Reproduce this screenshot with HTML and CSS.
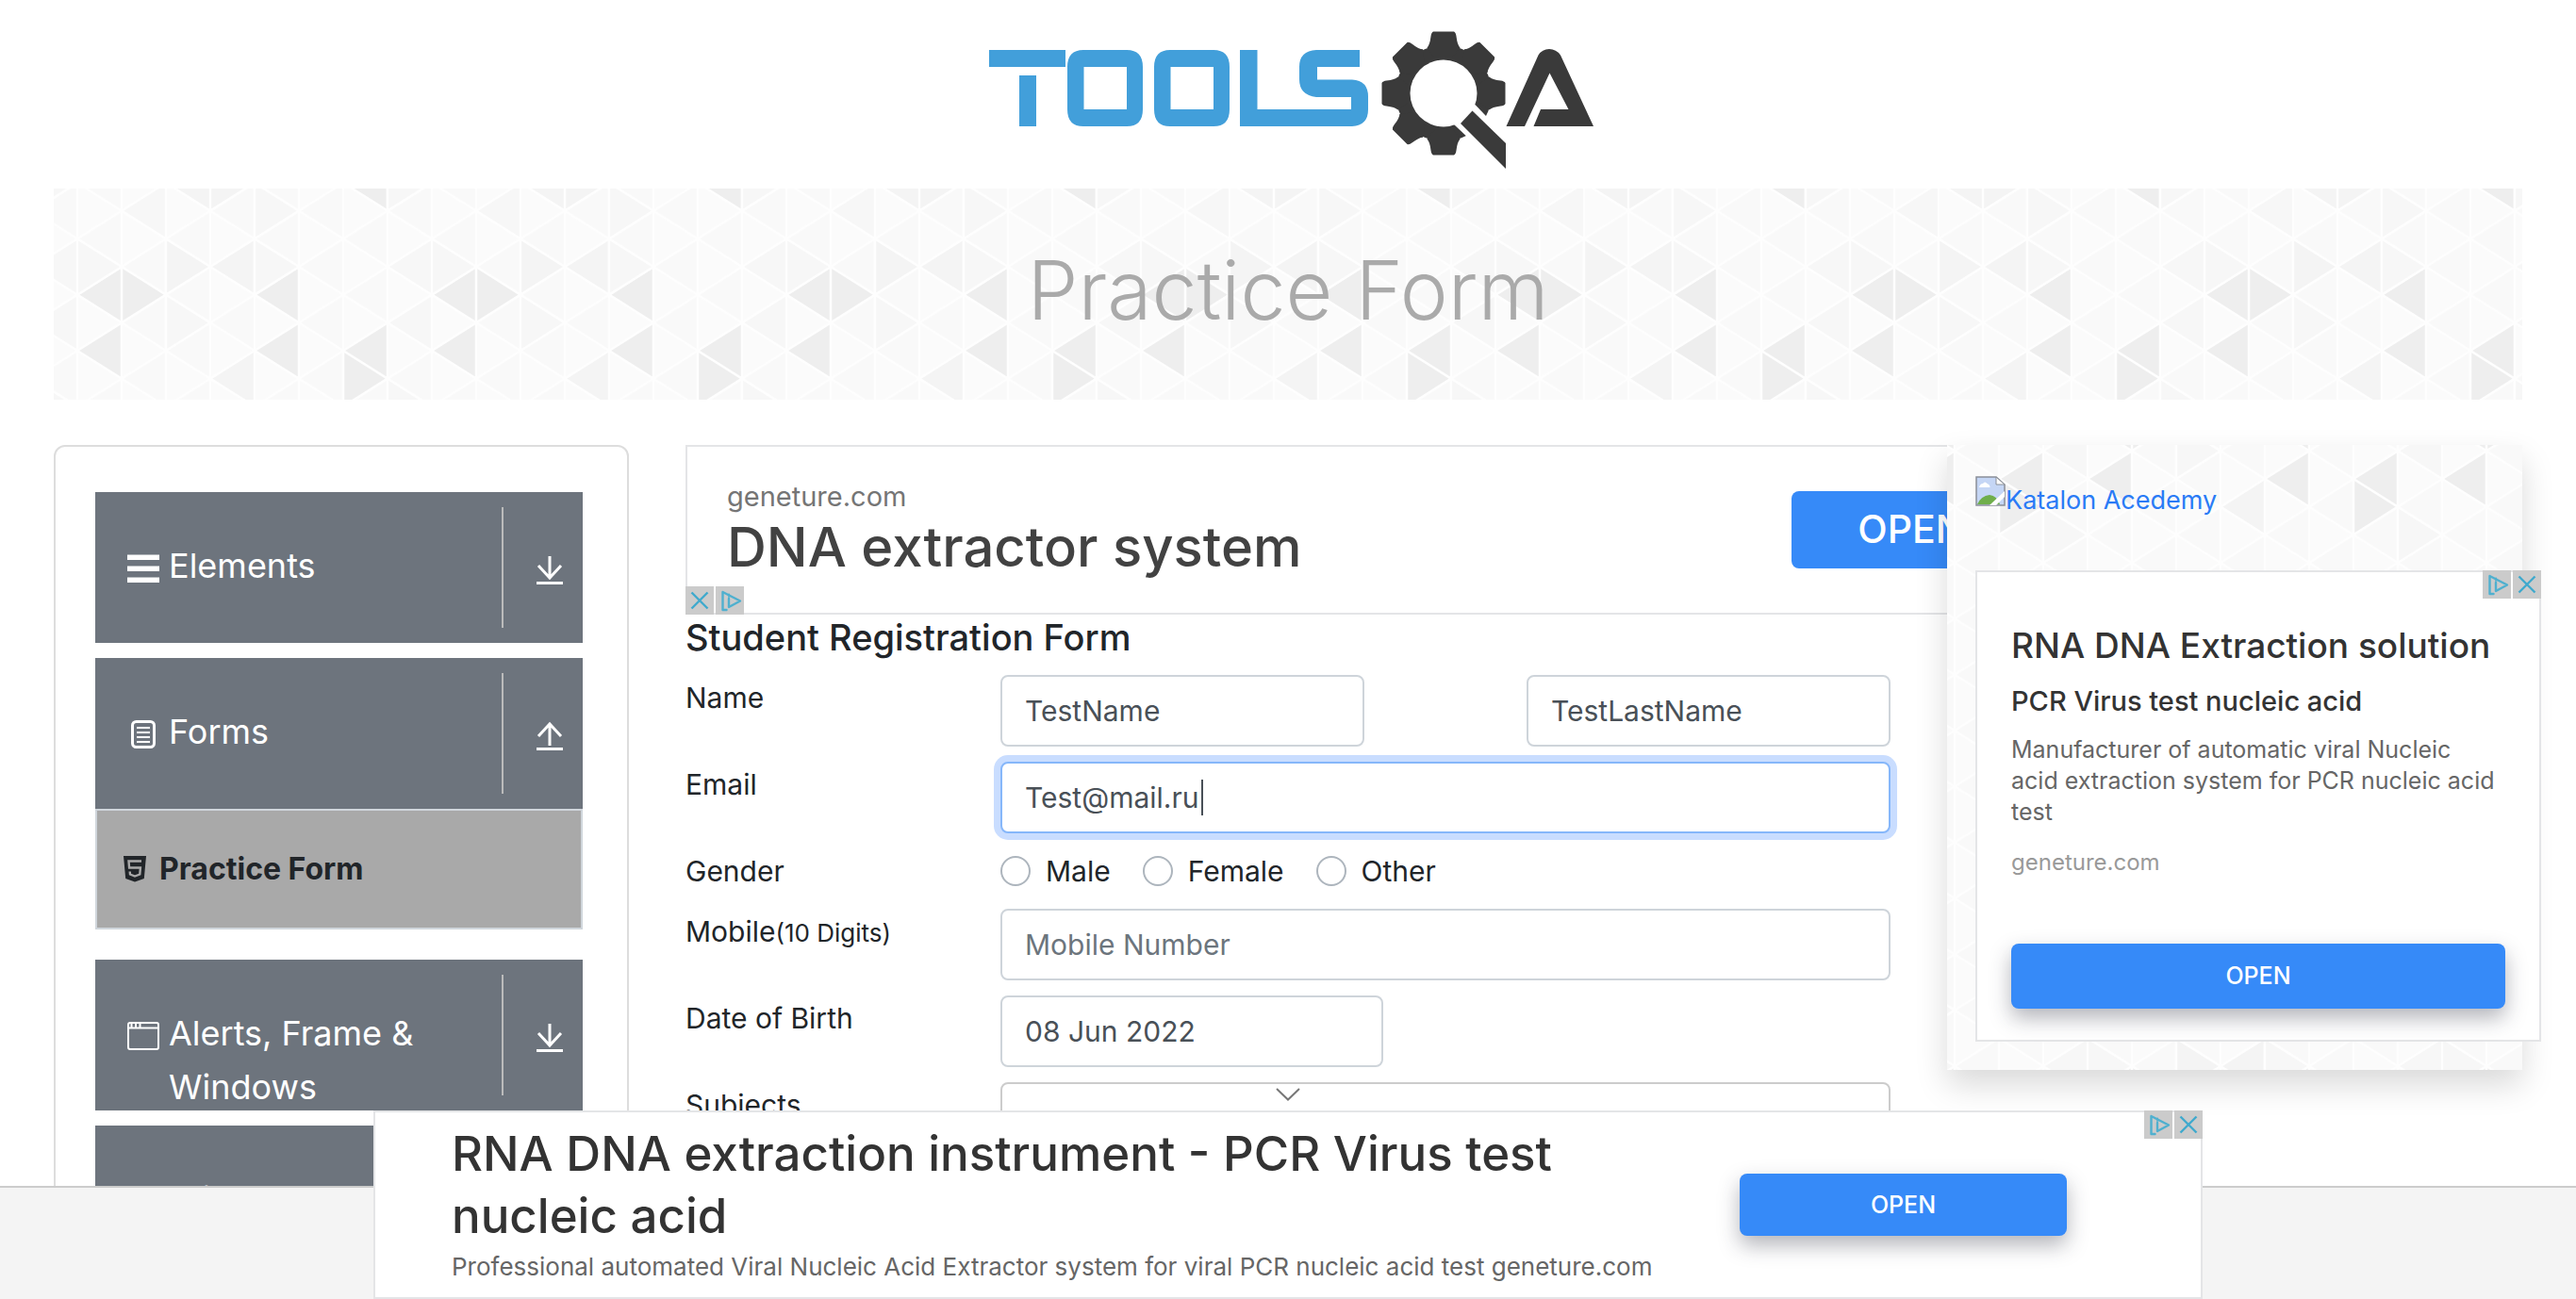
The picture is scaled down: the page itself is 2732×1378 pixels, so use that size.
FILE: index.html
```html
<!DOCTYPE html>
<html lang="en">
<head>
<meta charset="utf-8">
<meta name="viewport" content="width=device-width, initial-scale=1">
<title>ToolsQA – Practice Form</title>
<link rel="stylesheet" href="styles.css">
</head>
<body>
<svg class="sprite" aria-hidden="true">
  <symbol id="arrow-down" viewBox="0 0 28 40"><path d="M14 8v23M2 18l12 13 12-13M0 36.500h28" fill="none" stroke="#fff" stroke-width="3"/></symbol>
  <symbol id="arrow-up" viewBox="0 0 28 40"><path d="M14 33V10M2 23L14 10l12 13M0 36.500h28" fill="none" stroke="#fff" stroke-width="3"/></symbol>
  <symbol id="adchoices" viewBox="0 0 30 30"><path d="M7.500 25V6L26 15.500 14 22v-9M14 8.800v1.700M7.500 25h4" fill="none" stroke="#4fb0cf" stroke-width="2.400" stroke-linejoin="round" stroke-linecap="round"/></symbol>
  <symbol id="close" viewBox="0 0 30 30"><path d="M6.500 6.500l17 17M23.500 6.500l-17 17" stroke="#3fa9cd" stroke-width="2.400"/></symbol>
</svg>

<header class="header">
  <a class="logo" href="#" aria-label="ToolsQA">
    <svg viewBox="0 0 732 200" width="732" height="200">
      <g fill="#429fda">
        <path d="M49 53h81v18H49zM81 80h18v54H81z"/>
        <path fill-rule="evenodd" d="M149 53h46q17 0 17 18v45q0 18-17 18h-46q-17 0-17-18V71q0-18 17-18zM149.500 71v45h45.500V71z"/>
        <path fill-rule="evenodd" d="M241 53h46q17 0 17 18v45q0 18-17 18h-46q-17 0-17-18V71q0-18 17-18zM241.500 71v45h45.500V71z"/>
        <path d="M315 53h18.500v63H433v-13h-37q-18-2-18-19V71q0-17 18-18h46v18h-45v13.500h37q17 1 17 18V116q0 17-17 18H315z"/>
      </g>
      <g fill="#3a3a3a">
        <circle cx="531" cy="99" r="51"/>
        <path d="M520 33.500h22q2 1 2.500 5 1 9 4 12l-8 10h-20l-7-10q3-3 4-12 .500-4 2.500-5z"/>
        <path d="M520 33.500h22q2 1 2.500 5 1 9 4 12l-8 10h-20l-7-10q3-3 4-12 .500-4 2.500-5z" transform="rotate(45 531 99)"/>
        <path d="M520 33.500h22q2 1 2.500 5 1 9 4 12l-8 10h-20l-7-10q3-3 4-12 .500-4 2.500-5z" transform="rotate(90 531 99)"/>
        <path d="M520 33.500h22q2 1 2.500 5 1 9 4 12l-8 10h-20l-7-10q3-3 4-12 .500-4 2.500-5z" transform="rotate(180 531 99)"/>
        <path d="M520 33.500h22q2 1 2.500 5 1 9 4 12l-8 10h-20l-7-10q3-3 4-12 .500-4 2.500-5z" transform="rotate(225 531 99)"/>
        <path d="M520 33.500h22q2 1 2.500 5 1 9 4 12l-8 10h-20l-7-10q3-3 4-12 .500-4 2.500-5z" transform="rotate(270 531 99)"/>
        <path d="M520 33.500h22q2 1 2.500 5 1 9 4 12l-8 10h-20l-7-10q3-3 4-12 .500-4 2.500-5z" transform="rotate(315 531 99)"/>
      </g>
      <circle cx="531" cy="99" r="35.500" fill="#fff"/>
      <path d="M564.500 111L614 163v37L542 132z" fill="#fff"/>
      <g fill="#3a3a3a">
        <path d="M561.500 117.500L597 152v27L549 131z"/>
        <path d="M597.500 134l34-75.500q4-6.500 11.500-6.500t12 6.500L690 134h-63.500l7.500-18h29.500L643.500 77.500 617 134z"/>
      </g>
    </svg>
  </a>
</header>

<div class="banner pattern"><h1>Practice Form</h1></div>

<div class="columns">
  <nav class="sidebar" aria-label="Sections">
    <button class="group" type="button">
      <svg class="group-icon" viewBox="0 0 34 57"><path d="M0 16.500h34v5.500H0zM0 28.500h34V34H0zM0 40.500h34V46H0z" fill="#fff"/></svg>
      <span class="group-label">Elements</span>
      <span class="group-arrow"><svg viewBox="0 0 28 40"><use href="#arrow-down"/></svg></span>
    </button>
    <button class="group open" type="button">
      <svg class="group-icon" viewBox="0 0 34 57"><rect x="5.500" y="17.500" width="23" height="27" rx="4" fill="none" stroke="#fff" stroke-width="3"/><path d="M10 24h14M10 29h14M10 34h14M10 39h14" stroke="#fff" stroke-width="2"/></svg>
      <span class="group-label">Forms</span>
      <span class="group-arrow"><svg viewBox="0 0 28 40"><use href="#arrow-up"/></svg></span>
    </button>
    <a class="item" href="#">
      <svg class="item-icon" viewBox="0 0 24 28"><path d="M0 0h24l-2.200 24L12 27.500 2.200 24z" fill="#212529"/><path d="M19 5.500H5.500l.6 7h11.800l-.6 7L12 21.500l-5-2-.3-3" fill="none" stroke="#a9a9a9" stroke-width="2.400"/></svg>
      <span>Practice Form</span>
    </a>
    <button class="group" type="button">
      <svg class="group-icon" viewBox="0 0 34 57"><rect x="1" y="17" width="32" height="28" rx="2" fill="none" stroke="#fff" stroke-width="2"/><path d="M1 22.500h32M4.500 18v4M9 18v4M13.500 18v4" stroke="#fff" stroke-width="2"/></svg>
      <span class="group-label">Alerts, Frame &amp; Windows</span>
      <span class="group-arrow"><svg viewBox="0 0 28 40"><use href="#arrow-down"/></svg></span>
    </button>
    <button class="group" type="button">
      <svg class="group-icon" viewBox="0 0 34 57"><path d="M2 18h12v12H2zM20 18h12v12H20zM2 36h12v12H2zM20 36h12v12H20z" fill="#fff"/></svg>
      <span class="group-label">Widgets</span>
      <span class="group-arrow"><svg viewBox="0 0 28 40"><use href="#arrow-down"/></svg></span>
    </button>
  </nav>

  <main class="main">
    <section class="ad ad-top" aria-label="Advertisement">
      <div>
        <p class="ad-site">geneture.com</p>
        <p class="ad-headline">DNA extractor system</p>
      </div>
      <button class="ad-open" type="button">OPEN</button>
      <div class="ad-marks left">
        <button type="button" aria-label="Close ad"><svg viewBox="0 0 30 30"><use href="#close"/></svg></button>
        <button type="button" aria-label="Ad choices"><svg viewBox="0 0 30 30"><use href="#adchoices"/></svg></button>
      </div>
    </section>

    <form class="form">
      <h2>Student Registration Form</h2>
      <div class="row">
        <label for="first">Name</label>
        <div class="names">
          <input class="field" id="first" type="text" value="TestName">
          <input class="field" type="text" value="TestLastName" aria-label="Last name">
        </div>
      </div>
      <div class="row">
        <label for="email">Email</label>
        <div class="email">
          <input class="field focused" id="email" type="text" value="Test@mail.ru">
          <span class="caret"></span>
        </div>
      </div>
      <div class="row">
        <span>Gender</span>
        <div class="radios">
          <label><input type="radio" name="gender">Male</label>
          <label><input type="radio" name="gender">Female</label>
          <label><input type="radio" name="gender">Other</label>
        </div>
      </div>
      <div class="row">
        <label for="mobile">Mobile<small>(10 Digits)</small></label>
        <input class="field" id="mobile" type="text" placeholder="Mobile Number">
      </div>
      <div class="row">
        <label for="birth">Date of Birth</label>
        <input class="field date" id="birth" type="text" value="08 Jun 2022">
      </div>
      <div class="row">
        <label for="subjects">Subjects</label>
        <input class="field subjects" id="subjects" type="text">
      </div>
    </form>
  </main>

  <aside class="side pattern">
    <a class="katalon" href="#">
      <svg viewBox="0 0 32 32"><path d="M1 1h21l9 8v22H1z" fill="#c5d6f5" stroke="#8a8f98" stroke-width="1.500"/><path d="M4 12q1-4 4-4 2-3 4.500 0 3 1 3 4z" fill="#fff"/><path d="M2 30q4-9 13-10 8 1 11 10z" fill="#6fae4b"/><path d="M31 16v6l-9 9h-7z" fill="#fff"/><path d="M22 1v8h9z" fill="#fff" stroke="#8a8f98"/></svg>
      <span>Katalon Acedemy</span>
    </a>
    <section class="ad ad-side" aria-label="Advertisement">
      <h3>RNA DNA Extraction solution</h3>
      <h4>PCR Virus test nucleic acid</h4>
      <p class="ad-text">Manufacturer of automatic viral Nucleic acid extraction system for PCR nucleic acid test</p>
      <p class="ad-url">geneture.com</p>
      <button class="ad-open raised" type="button">OPEN</button>
      <div class="ad-marks">
        <button type="button" aria-label="Ad choices"><svg viewBox="0 0 30 30"><use href="#adchoices"/></svg></button>
        <button type="button" aria-label="Close ad"><svg viewBox="0 0 30 30"><use href="#close"/></svg></button>
      </div>
    </section>
  </aside>
</div>

<footer class="footer"></footer>

<section class="ad ad-bottom" aria-label="Advertisement">
  <button class="collapse" type="button" aria-label="Hide ad"><svg viewBox="0 0 26 14"><path d="M1 1l12 11.500L25 1" fill="none" stroke="#777" stroke-width="2"/></svg></button>
  <div class="ad-copy">
    <p class="ad-title">RNA DNA extraction instrument - PCR Virus test nucleic acid</p>
    <p class="ad-sub">Professional automated Viral Nucleic Acid Extractor system for viral PCR nucleic acid test geneture.com</p>
  </div>
  <button class="ad-open raised" type="button">OPEN</button>
  <div class="ad-marks">
    <button type="button" aria-label="Ad choices"><svg viewBox="0 0 30 30"><use href="#adchoices"/></svg></button>
    <button type="button" aria-label="Close ad"><svg viewBox="0 0 30 30"><use href="#close"/></svg></button>
  </div>
</section>
</body>
</html>
```
FILE: styles.css
```css
*, *::before, *::after { box-sizing: border-box; }

body {
  margin: 0;
  height: 100vh;
  overflow: hidden;
  background: #fff;
  color: #212529;
  font: 400 30px/48px Inter, "Liberation Sans", sans-serif;
}

h1, h2, h3, h4, p { margin: 0; }
button { border: 0; padding: 0; font: inherit; color: inherit; cursor: pointer; }
a { color: inherit; text-decoration: none; }
svg { display: block; flex: none; }
.sprite { position: absolute; width: 0; height: 0; }

/* Header and banner */
.header { display: flex; justify-content: center; height: 200px; }

.pattern {
  background-color: #fafafa;
  background-image: url("data:image/svg+xml,%3Csvg xmlns='http://www.w3.org/2000/svg' width='376' height='712'%3E%3Cdefs%3E%3Cpattern id='g' width='94' height='59.333' patternUnits='userSpaceOnUse'%3E%3Crect width='94' height='59.333' fill='%23fbfbfb'/%3E%3Cpath d='M0 0L47-29.667V29.667zM0 59.333L47 29.667V89zM47 29.667L94 0V59.333z' fill='%23f9f9f9'/%3E%3Cpath d='M0 0L94 59.333M0 59.333L94 0M0 0V60M47 0V60M94 0V60' stroke='%23fefefe' stroke-width='2.500'/%3E%3C/pattern%3E%3C/defs%3E%3Crect width='376' height='712' fill='url(%23g)'/%3E%3Cg stroke='%23fefefe' stroke-width='2.500'%3E%3Cg fill='%23eeeeee'%3E%3Cpath d='M0 118.667l47-29.667v59.333zM0 178l47-29.667v59.333zM94 118.667l-47-29.667v59.333zM188 118.667l47-29.667v59.333zM188 178l47-29.667v59.333zM282 0l47-29.667v59.333zM282 178l47-29.667v59.333zM329 207.667l-47-29.667v59.333z'/%3E%3C/g%3E%3Cg fill='%23f4f4f4'%3E%3Cpath d='M141 89l-47-29.667v59.333zM94 0l47-29.667v59.333zM188 0l-47-29.667v59.333zM141 89l47-29.667v59.333zM141 207.667l47-29.667v59.333z'/%3E%3C/g%3E%3Cg fill='%23f7f7f7'%3E%3Cpath d='M47 29.667l47-29.667v59.333zM47 89l-47-29.667v59.333zM329 89l47-29.667v59.333zM376 0l-47-29.667v59.333zM329 148.333l47-29.667v59.333zM376 237.333l-47-29.667v59.333zM141 148.333l-47-29.667v59.333zM235 89l-47-29.667v59.333zM235 29.667l-47-29.667v59.333z'/%3E%3C/g%3E%3C/g%3E%3C/svg%3E");
}

.banner {
  display: flex;
  align-items: center;
  justify-content: center;
  height: 224px;
  margin: 0 57px;
  padding-bottom: 8px;
  background-position: 25px -6px;
}
.banner h1 { font-weight: 300; font-size: 86px; line-height: 104px; color: #aaa; }

.columns {
  display: grid;
  grid-template-columns: 610px minmax(0, 1fr) 610px;
  align-items: start;
  padding: 48px 57px 0;
}

/* Sidebar */
.sidebar {
  display: flex;
  flex-direction: column;
  gap: 16px;
  padding: 48px 47px 48px 42px;
  border: 2px solid #ddd;
  border-radius: 12px;
}
.group {
  display: flex;
  align-items: flex-start;
  height: 160px;
  padding: 0 0 0 34px;
  background: #6d747d;
  color: #fff;
  font-size: 36px;
  line-height: 57px;
  text-align: left;
}
.group-icon { width: 34px; height: 57px; margin-top: 50px; }
.group-label { flex: 1; padding: 50px 60px 0 10px; }
.group-arrow {
  display: flex;
  align-items: center;
  justify-content: flex-end;
  align-self: center;
  width: 86px;
  height: 128px;
  padding-right: 21px;
  border-left: 2px solid #bbb;
}
.group-arrow svg { width: 28px; height: 40px; }
.group.open { margin-bottom: -16px; }
.item {
  display: flex;
  align-items: center;
  gap: 14px;
  height: 128px;
  margin-bottom: 16px;
  padding-left: 28px;
  border: 2px solid #d0d6dc;
  background: #a9a9a9;
  font-weight: 700;
  font-size: 32px;
}
.item-icon { width: 24px; height: 28px; }

/* Registration form */
.main { padding: 0 60px; }
.form h2 { margin-bottom: 16px; font-weight: 500; font-size: 38px; line-height: 48px; }
.row {
  display: grid;
  grid-template-columns: 334px minmax(0, 1fr);
  align-items: start;
  margin-bottom: 16px;
}
.row small { font-size: 26px; }
.field {
  display: block;
  width: 100%;
  height: 76px;
  padding: 0 24px;
  border: 2px solid #ced4da;
  border-radius: 8px;
  outline: 0;
  background: #fff;
  color: #495057;
  font: inherit;
}
.field::placeholder { color: #6c757d; opacity: 1; }
.field.focused { border-color: #86b7fa; box-shadow: 0 0 0 7px #c9ddff; }
.field.date { width: 406px; }
.field.subjects { border-color: #ccc; }
.names { display: flex; justify-content: space-between; }
.names .field { width: 386px; }
.email { position: relative; }
.caret { position: absolute; top: 19px; left: 213px; width: 2px; height: 38px; background: #495057; }
.radios { display: flex; gap: 34px; }
.radios label { display: flex; align-items: center; gap: 16px; }
.radios input {
  appearance: none;
  width: 32px;
  height: 32px;
  margin: 0;
  border: 2px solid #adb5bd;
  border-radius: 50%;
  background: #fff;
}

/* Promo column */
.side {
  position: relative;
  padding: 33px 30px 30px;
  background-position: -227px -142px;
  box-shadow: 0 16px 32px rgba(0, 0, 0, 0.15);
}
.katalon {
  display: flex;
  margin-bottom: 58px;
  color: #2a7bf6;
  font-size: 27px;
  line-height: 33px;
}
.katalon svg { width: 32px; height: 32px; }
.katalon span { padding-top: 9px; }

/* Ads */
.ad { position: relative; border: 2px solid #e4e5e7; background: #fff; }
.ad-open { border-radius: 8px; background: #368af8; color: #fff; font-weight: 500; font-size: 25px; }
.raised { box-shadow: 0 10px 22px rgba(40, 44, 60, 0.35); }
.ad-marks { position: absolute; top: -2px; right: -2px; display: flex; gap: 2px; }
.ad-marks.left { top: auto; right: auto; bottom: -2px; left: -2px; }
.ad-marks button { width: 30px; height: 30px; background: #cbcbcb; }

.ad-top {
  display: flex;
  align-items: center;
  justify-content: space-between;
  width: 1456px;
  height: 180px;
  padding: 0 27px 0 42px;
}
.ad-site { color: #757575; font-size: 29px; line-height: 36px; }
.ad-headline { color: #424242; font-weight: 500; font-size: 58px; line-height: 70px; }
.ad-top .ad-open { width: 254px; height: 82px; padding-bottom: 2px; font-size: 41px; }

.ad-side {
  display: flex;
  flex-direction: column;
  width: 600px;
  height: 500px;
  padding: 56px 36px 33px 36px;
}
.ad-side h3 { margin-bottom: 19px; color: #333; font-weight: 500; font-size: 37px; line-height: 44px; white-space: nowrap; }
.ad-side h4 { margin-bottom: 17px; color: #333; font-weight: 500; font-size: 29px; line-height: 36px; }
.ad-text { margin-bottom: 22px; padding-right: 5px; color: #666; font-size: 25px; line-height: 33px; }
.ad-url { color: #999; font-size: 24px; line-height: 30px; }
.ad-side .ad-open { height: 69px; margin-top: auto; padding-bottom: 2px; }

.footer {
  position: fixed;
  right: 0;
  bottom: 0;
  left: 0;
  height: 120px;
  border-top: 2px solid #ccc;
  background: #f4f4f4;
}

.ad-bottom {
  position: fixed;
  bottom: 0;
  left: 50%;
  display: flex;
  align-items: center;
  justify-content: space-between;
  width: 1940px;
  height: 200px;
  margin-left: -970px;
  padding: 0 142px 0 81px;
}
.ad-copy { width: 1310px; }
.ad-title { color: #333; font-weight: 500; font-size: 51px; line-height: 66px; }
.ad-sub { color: #666; font-size: 26px; line-height: 42px; white-space: nowrap; }
.ad-bottom .ad-open { width: 347px; height: 66px; }
.collapse { position: absolute; top: -26px; left: 50%; width: 26px; margin-left: -13px; background: none; }
```
